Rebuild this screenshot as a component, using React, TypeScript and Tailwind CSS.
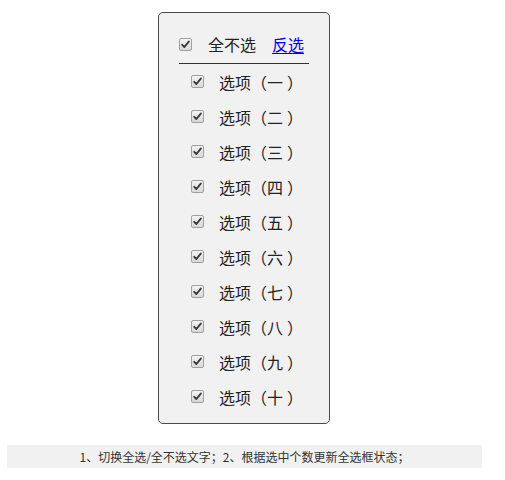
import React from "react";

const Check = () => (
  <span className="inline-flex items-center justify-center w-[13px] h-[13px] border border-[#a0a0a0] rounded-[2px] bg-gradient-to-b from-[#f4f4f4] to-[#d8d8d8] shrink-0">
    <svg width="9" height="9" viewBox="0 0 9 9">
      <path d="M1.2 4.8 L3.4 7 L7.8 1.6" fill="none" stroke="#3a3a3a" strokeWidth="1.9" strokeLinecap="round" strokeLinejoin="round" />
    </svg>
  </span>
);

const items = ["一", "二", "三", "四", "五", "六", "七", "八", "九", "十"];

export default function App() {
  return (
    <div className="bg-white min-h-[480px] pt-[12px]" style={{ fontFamily: '"Noto Sans CJK SC", "Noto Sans", sans-serif' }}>
      <div className="ml-[7px] w-[474px] flex flex-col items-center">
        <div className="w-[172px] h-[412px] border border-[#4a4a4a] rounded-[5px] bg-[#f1f1f1] pt-[16px]">
          <div className="mx-[20px] border-b border-[#333] pb-[4px]">
            <div className="h-[30px] flex items-center text-[16px] text-[#222]">
              <Check />
              <span className="ml-[16px] leading-none">全不选</span>
              <a href="#" className="ml-[16px] leading-none text-[#0000ee] underline underline-offset-2">反选</a>
            </div>
          </div>
          <div className="flex flex-col">
            {items.map((c) => (
              <div key={c} className="h-[35px] flex items-center pl-[32px] text-[16px] text-[#222]">
                <Check />
                <span className="ml-[15px] leading-none whitespace-nowrap">
                  选项（{c}<span className="ml-[4px]">）</span>
                </span>
              </div>
            ))}
          </div>
        </div>
        <div className="mt-[21px] w-[475px] self-start h-[23px] bg-[#f1f1f1] flex items-center justify-center text-[12px] text-[#333] leading-none">
          1、切换全选/全不选文字；2、根据选中个数更新全选框状态；
        </div>
      </div>
    </div>
  );
}
